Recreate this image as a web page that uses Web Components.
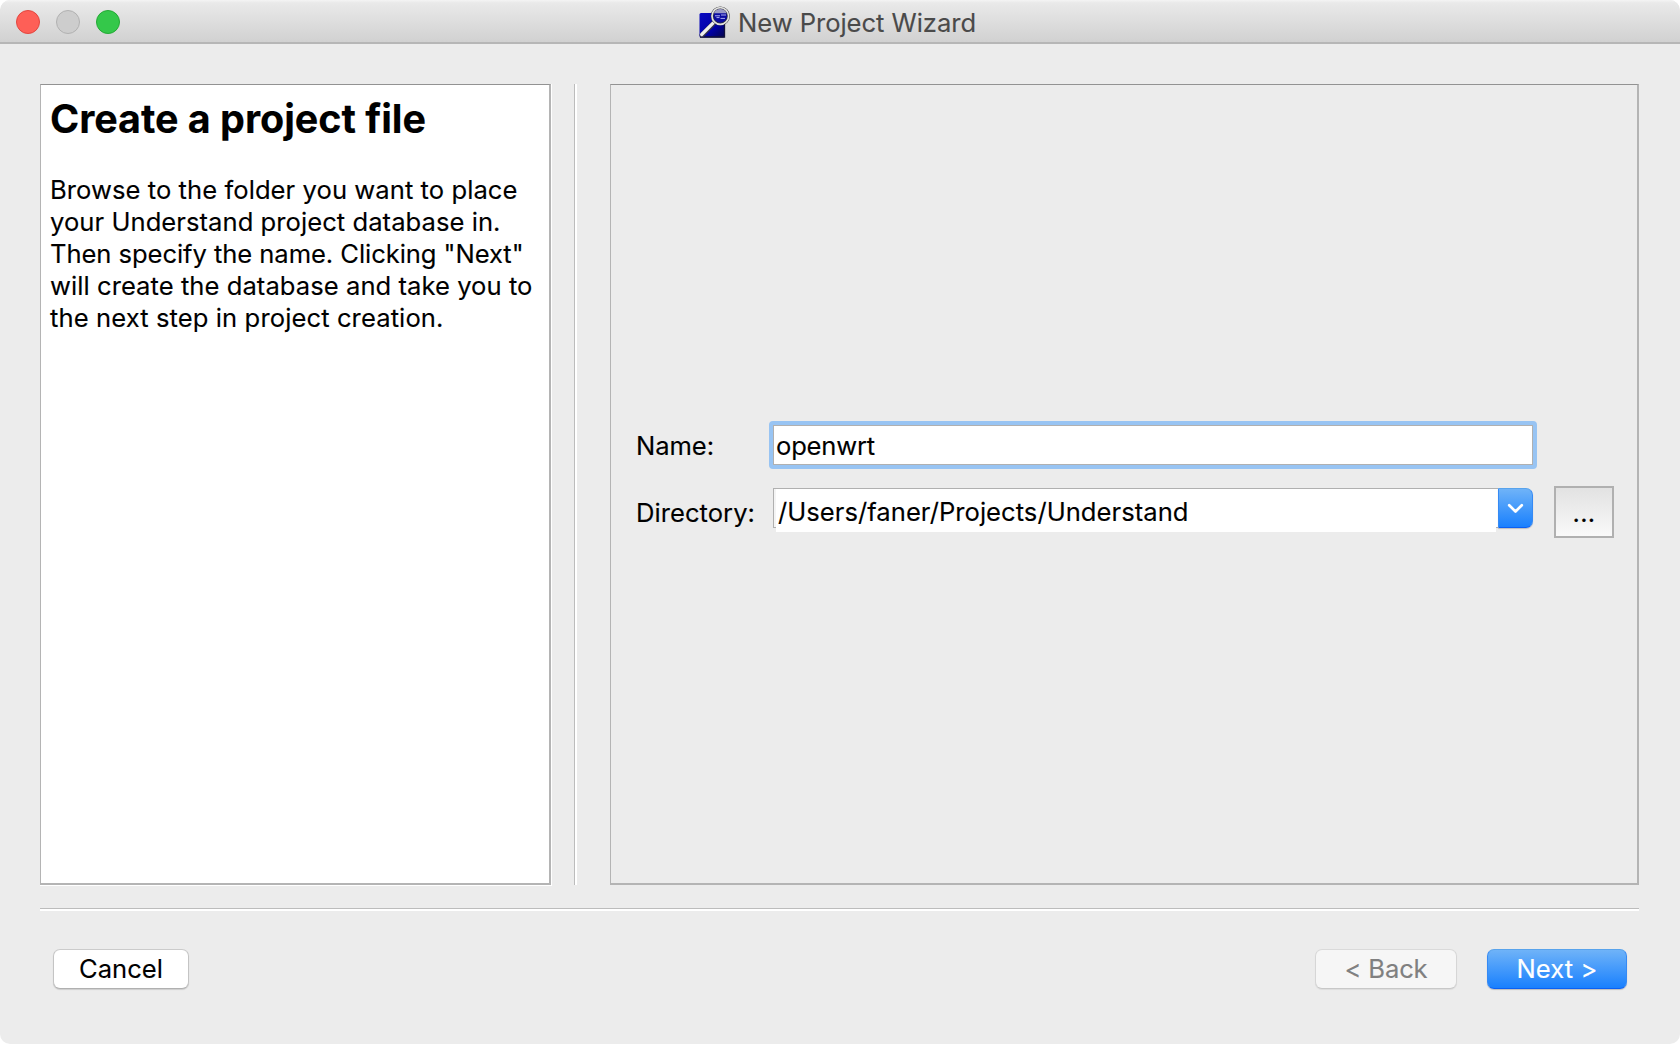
<!DOCTYPE html>
<html lang="en">
<head>
<meta charset="utf-8">
<title>New Project Wizard</title>
<style>
html,body{margin:0;height:100%;background:#fff;overflow:hidden}
body{font:25.6px/32px Inter,"Liberation Sans",sans-serif;color:#000;-webkit-text-stroke:.12px}
</style>
</head>
<body>
<wizard-window></wizard-window>
<script>
const define=(name,html,setup)=>customElements.define(name,class extends HTMLElement{
  connectedCallback(){
    if(this.shadowRoot)return;
    this.attachShadow({mode:'open'}).innerHTML=html;
    if(setup)setup(this);
  }
});

/* One line of text, tracked so that it spans the given width. */
define('text-line','<style>:host{display:block;white-space:pre;width:max-content}span{display:inline-block}</style><span><slot></slot></span>',el=>{
  const span=el.shadowRoot.querySelector('span'),n=el.textContent.length;
  const w=span.getBoundingClientRect().width;
  span.style.letterSpacing=((Number(el.getAttribute('span'))-w)/n)+'px';
});

define('window-light',`<style>
:host{display:block;box-sizing:border-box;width:24px;height:24px;border-radius:50%;border:1px solid #b1b1b1;background:#cdcdcd}
:host([kind=close]){background:#fe5f57;border-color:#e2463f}
:host([kind=zoom]){background:#34c84a;border-color:#24a935}
</style>`);

define('app-icon',`<style>:host{display:block;width:34px;height:34px}svg{display:block}</style>
<svg width="34" height="34" viewBox="0 0 34 34">
<defs><linearGradient id="b" x1="0" y1="0" x2="1" y2="1"><stop offset="0" stop-color="#0a0ac0"/><stop offset=".6" stop-color="#0000a8"/><stop offset="1" stop-color="#050548"/></linearGradient></defs>
<rect x="1.5" y="8" width="25" height="24.5" rx="1.5" fill="url(#b)"/>
<path d="M2 32h24.5V12" fill="none" stroke="#11113a" stroke-width="1.3"/>
<path d="M4 30 15.5 18.3" stroke="#33334a" stroke-width="5" stroke-linecap="round"/>
<path d="M3.7 29.5 15.5 17.7" stroke="#eee" stroke-width="3.2" stroke-linecap="round"/>
<circle cx="22.3" cy="11" r="8.2" fill="#0b0ba0" stroke="#333" stroke-width="2.8"/>
<circle cx="22.3" cy="11" r="8.3" fill="none" stroke="#e2e2e2" stroke-width="1.7"/>
<path d="M15.9 8.2a7 7 0 0 1 12.8 0z" fill="#b5b5cc" opacity=".85"/>
<path d="M17 10.8h5M23 10h5M18.5 12.6h3M22.5 13.4h4.500" stroke="#c9c9ff" stroke-width="1" opacity=".85"/>
</svg>`);

define('title-bar',`<style>
:host{display:flex;box-sizing:border-box;height:44px;border-bottom:2px solid #b6b6b6;background:linear-gradient(#f4f4f4 0,#e9e9e9 3px,#d1d1d1 100%);border-radius:10px 10px 0 0;padding:5px 0 0 16px;align-items:flex-start}
.lights{display:flex;gap:16px;padding-top:5px;width:682px}
app-icon{margin-right:6px}
text-line{color:#4a4a4a;margin-top:2px}
</style>
<div class="lights"><window-light kind="close"></window-light><window-light></window-light><window-light kind="zoom"></window-light></div>
<app-icon></app-icon><text-line span="238">New Project Wizard</text-line>`);

define('help-panel',`<style>
:host{display:block;box-sizing:border-box;width:512px;height:802px;border-right:1px solid #fff;border-bottom:1px solid #fff}
.box{box-sizing:border-box;height:801px;background:#fff;border:1px solid #b4b4b4;border-top-color:#929292;border-right-width:2px;border-bottom-width:2px;padding:10px 0 0 9px}
h1{font-size:39.5px;line-height:48px;font-weight:700;margin:0 0 31px}
</style><div class="box">
<h1><text-line span="376">Create a project file</text-line></h1>
<text-line span="467.500">Browse to the folder you want to place</text-line>
<text-line span="450.500">your Understand project database in.</text-line>
<text-line span="473.500">Then specify the name. Clicking "Next"</text-line>
<text-line span="482.500">will create the database and take you to</text-line>
<text-line span="393.500">the next step in project creation.</text-line></div>`);

define('name-field',`<style>
:host{display:block;box-sizing:border-box;width:768px;height:48px;border-radius:4px;background:#98c4f3;padding:4px}
div{box-sizing:border-box;height:40px;border:1px solid #b0b0b0;background:#fff;padding:4px 0 0 2px}
</style><div><slot></slot></div>`);

define('path-combo',`<style>
:host{display:flex;width:760px;height:45px}
.edge{width:3px;height:40px;box-sizing:border-box;border:1px solid #b0b0b0;border-right:0;background:#f4f4f4}
.text{width:720px;height:44px;box-sizing:border-box;border-top:1px solid #b0b0b0;background:#fff;padding:7px 0 0 2px}
.gap{width:2px;height:40px;box-sizing:border-box;background:#fff;border:solid #b0b0b0;border-width:1px 0}
.drop{box-sizing:border-box;width:35px;height:40px;border:1px solid;border-color:#58a3ec #368af4 #0b60f3;border-radius:0 7px 7px 0;background:linear-gradient(#6fb3f8,#1980fe);box-shadow:0 1px 1px #0003}
svg{display:block}
</style><span class="edge"></span><span class="text"><slot></slot></span><span class="gap"></span>
<span class="drop"><svg width="33" height="38" viewBox="0 0 33 38"><path d="M10.2 16.2 16.5 22.5 22.8 16.2" fill="none" stroke="#fff" stroke-width="2.7" stroke-linecap="round" stroke-linejoin="round"/></svg></span>`);

define('browse-button',`<style>
:host{display:flex;justify-content:center;box-sizing:border-box;width:60px;height:52px;border:2px solid #b0b0b0;background:linear-gradient(#e2e2e2,#f9f9f9);padding-top:9px}
</style><slot></slot>`);

define('form-panel',`<style>
:host{display:block;box-sizing:border-box;width:1029px;height:801px;border:1px solid #b4b4b4;border-top-color:#929292;border-right-width:2px;border-bottom-width:2px;padding:336px 0 0 25px}
.row{display:flex}
.label{width:133px}
.dir .label{width:137px}
.dir{margin-top:17px}
path-combo{margin-top:2px;margin-right:21px}
</style>
<div class="row"><div class="label" style="padding-top:9px"><text-line span="78">Name:</text-line></div><name-field><text-line span="99">openwrt</text-line></name-field></div>
<div class="row dir"><div class="label" style="padding-top:11px"><text-line span="119">Directory:</text-line></div><path-combo><text-line span="410.500">/Users/faner/Projects/Understand</text-line></path-combo><browse-button><text-line span="23">...</text-line></browse-button></div>`);

define('push-button',`<style>
:host{display:flex;justify-content:center;box-sizing:border-box;height:40px;padding-top:3px;border:1px solid;border-color:#cbcbcb #c4c4c4 #b0b0b0;border-radius:7px;background:#fff;box-shadow:0 1px 1px #0002}
:host([disabled]){color:#808080;background:#f6f6f6;border-color:#dadada #d6d6d6 #c8c8c8;box-shadow:0 1px 1px #0001}
:host([primary]){color:#fff;border-color:#58a3ec #368af4 #0b60f3;background:linear-gradient(#6fb3f8,#1980fe);box-shadow:0 1px 1px #0003}
</style><slot></slot>`);

define('wizard-window',`<style>
:host{display:flex;flex-direction:column;width:1680px;height:1044px;background:#ececec;border-radius:10px;overflow:hidden}
.content{display:flex;padding:40px 0 0 40px}
.divider{width:0;height:801px;margin:0 33px 0 22px;border-left:1px solid #bcbcbc;border-right:2px solid #fff}
.rule{margin:22px 41px 0 40px;height:2px;border-top:1px solid #bcbcbc;background:#fff}
.buttons{display:flex;padding:38px 0 0 53px}
.cancel{width:136px;margin-right:1126px}.back{width:142px;margin-right:30px}.next{width:140px}
</style>
<title-bar></title-bar>
<div class="content"><help-panel></help-panel><div class="divider"></div><form-panel></form-panel></div>
<div class="rule"></div>
<div class="buttons"><push-button class="cancel"><text-line span="84">Cancel</text-line></push-button><push-button class="back" disabled><text-line span="83">&lt; Back</text-line></push-button><push-button class="next" primary><text-line span="81">Next &gt;</text-line></push-button></div>`);
</script>
</body>
</html>
